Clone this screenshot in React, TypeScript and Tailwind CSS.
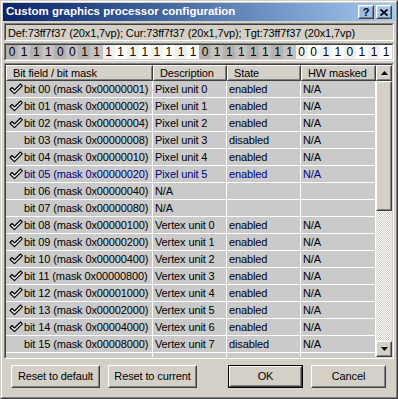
import React from "react";

const BITS = "01110011111111110111111100110111";

interface IRow {
  bit: string;
  mask: string;
  desc: string;
  state: string;
  hw: string;
  checked: boolean;
  blue?: boolean;
}

const rows: IRow[] = [
  { bit: "00", mask: "0x00000001", desc: "Pixel unit 0", state: "enabled", hw: "N/A", checked: true },
  { bit: "01", mask: "0x00000002", desc: "Pixel unit 1", state: "enabled", hw: "N/A", checked: true },
  { bit: "02", mask: "0x00000004", desc: "Pixel unit 2", state: "enabled", hw: "N/A", checked: true },
  { bit: "03", mask: "0x00000008", desc: "Pixel unit 3", state: "disabled", hw: "N/A", checked: false },
  { bit: "04", mask: "0x00000010", desc: "Pixel unit 4", state: "enabled", hw: "N/A", checked: true },
  { bit: "05", mask: "0x00000020", desc: "Pixel unit 5", state: "enabled", hw: "N/A", checked: true, blue: true },
  { bit: "06", mask: "0x00000040", desc: "N/A", state: "", hw: "", checked: false },
  { bit: "07", mask: "0x00000080", desc: "N/A", state: "", hw: "", checked: false },
  { bit: "08", mask: "0x00000100", desc: "Vertex unit 0", state: "enabled", hw: "N/A", checked: true },
  { bit: "09", mask: "0x00000200", desc: "Vertex unit 1", state: "enabled", hw: "N/A", checked: true },
  { bit: "10", mask: "0x00000400", desc: "Vertex unit 2", state: "enabled", hw: "N/A", checked: true },
  { bit: "11", mask: "0x00000800", desc: "Vertex unit 3", state: "enabled", hw: "N/A", checked: true },
  { bit: "12", mask: "0x00001000", desc: "Vertex unit 4", state: "enabled", hw: "N/A", checked: true },
  { bit: "13", mask: "0x00002000", desc: "Vertex unit 5", state: "enabled", hw: "N/A", checked: true },
  { bit: "14", mask: "0x00004000", desc: "Vertex unit 6", state: "enabled", hw: "N/A", checked: true },
  { bit: "15", mask: "0x00008000", desc: "Vertex unit 7", state: "disabled", hw: "N/A", checked: false },
];

// classic 3d edges
const Raised = ({ className, children }: { className?: string; children?: React.ReactNode }) => (
  <div className={"border border-t-white border-l-white border-r-[#404040] border-b-[#404040] " + (className || "")}>
    <div className="w-full h-full border border-t-[#D4D0C8] border-l-[#D4D0C8] border-r-[#808080] border-b-[#808080] flex items-center justify-center">
      {children}
    </div>
  </div>
);

const Sunken = ({ className, children }: { className?: string; children?: React.ReactNode }) => (
  <div className={"border border-t-[#808080] border-l-[#808080] border-r-white border-b-white " + (className || "")}>
    <div className="w-full h-full border border-t-[#404040] border-l-[#404040] border-r-[#D4D0C8] border-b-[#D4D0C8] flex overflow-hidden">
      {children}
    </div>
  </div>
);

const Check = () => (
  <svg width="14" height="12" viewBox="0 0 14 12" className="shrink-0">
    <path d="M1 6.5 L3 4.5 L5.5 7 L11.5 1 L13.3 2.8 L5.5 10.6 Z" fill="#ececec" stroke="#000" strokeWidth="1.1" strokeLinejoin="round" />
  </svg>
);

const Arrow = ({ up }: { up: boolean }) => (
  <svg width="7" height="4" viewBox="0 0 7 4">
    <path d={up ? "M0 4 L3.5 0 L7 4 Z" : "M0 0 L3.5 4 L7 0 Z"} fill="#000" />
  </svg>
);

const Header = ({ w, label }: { w: string; label: string }) => (
  <Raised className={w + " h-[16px] shrink-0"}>
    <span className="w-full pl-[5px] leading-[14px]">{label}</span>
  </Raised>
);

const App = () => {
  return (
    <div
      className="w-[398px] h-[399px] bg-[#D4D0C8] border border-t-[#D4D0C8] border-l-[#D4D0C8] border-r-[#404040] border-b-[#404040] text-[11px] text-black tracking-[-0.12px]"
      style={{ fontFamily: '"Liberation Sans", Arial, sans-serif' }}
    >
      <div className="w-full h-full border border-t-white border-l-white border-r-[#808080] border-b-[#808080] p-px flex flex-col">
        {/* title bar */}
        <div className="h-[18px] bg-linear-to-r from-[#0A246A] to-[#A6CAF0] flex items-center pl-[3px] pr-[3px]">
          <span className="text-white font-bold text-[11.5px] tracking-normal flex-1">Custom graphics processor configuration</span>
          <Raised className="w-[16px] h-[14px]">
            <span className="font-bold text-[11px] leading-none tracking-normal">?</span>
          </Raised>
          <Raised className="w-[16px] h-[14px] ml-[2px]">
            <svg width="8" height="7" viewBox="0 0 8 7">
              <path d="M0.5 0.5 L7.5 6.5 M7.5 0.5 L0.5 6.5" stroke="#000" strokeWidth="1.8" />
            </svg>
          </Raised>
        </div>

        <div className="px-px flex flex-col">
          {/* info line */}
          <Sunken className="mt-[2px] h-[18px]">
            <span className="pl-[2px] leading-[16px] whitespace-nowrap">
              Def:73ff7f37 (20x1,7vp); Cur:73ff7f37 (20x1,7vp); Tgt:73ff7f37 (20x1,7vp)
            </span>
          </Sunken>

          {/* bit bar */}
          <Sunken className="mt-[2px] h-[18px]">
            {BITS.split("").map((b, i) => {
              const gray = Math.floor(i / 8) % 2 === 0;
              const even = i % 2 === 0;
              const bg = gray
                ? even
                  ? "bg-[#B2B2B2]"
                  : "bg-[#C2C2C2]"
                : even
                ? "bg-[#F0F0F0]"
                : "bg-white";
              return (
                <div key={i} className={"flex-1 flex items-center justify-center text-[12px] " + bg}>
                  {b}
                </div>
              );
            })}
          </Sunken>

          {/* list */}
          <Sunken className="mt-[2px] h-[296px]">
            <div className="flex-1 flex flex-col overflow-hidden bg-[#CACACA]">
              <div className="flex bg-[#D4D0C8]">
                <Header w="w-[147px]" label="Bit field / bit mask" />
                <Header w="w-[74px]" label="Description" />
                <Header w="w-[74px]" label="State" />
                <Header w="w-[75px]" label="HW masked" />
              </div>
              {[...rows, null].map((r, i) => (
                <div key={i} className={"flex h-[17px] shrink-0 border-b border-white " + (r && r.blue ? "text-[#000080]" : "")}>
                  <div className="w-[147px] border-r border-white flex items-center pl-[3px]">
                    <div className="w-[15px]">{r && r.checked && <Check />}</div>
                    <span className="whitespace-nowrap">{r && `bit ${r.bit} (mask ${r.mask})`}</span>
                  </div>
                  <div className="w-[74px] border-r border-white pl-[2px] leading-[16px] whitespace-nowrap overflow-hidden">{r && r.desc}</div>
                  <div className="w-[74px] border-r border-white pl-[2px] leading-[16px]">{r && r.state}</div>
                  <div className="w-[75px] border-r border-white pl-[2px] leading-[16px]">{r && r.hw}</div>
                </div>
              ))}
            </div>
            {/* scrollbar */}
            <div className="w-[16px] flex flex-col">
              <Raised className="h-[16px]">
                <Arrow up />
              </Raised>
              <Raised className="h-[130px]" />
              <div className="flex-1 bg-[repeating-conic-gradient(#ffffff_0_25%,#D4D0C8_0_50%)] bg-[length:2px_2px]" />
              <Raised className="h-[16px]">
                <Arrow up={false} />
              </Raised>
            </div>
          </Sunken>

          {/* buttons */}
          <div className="mt-[6px] h-[23px] flex">
            <Raised className="w-[89px] h-full ml-[7px]">Reset to default</Raised>
            <Raised className="w-[89px] h-full ml-[8px]">Reset to current</Raised>
            <div className="w-[75px] h-full ml-[31px] border border-black">
              <Raised className="w-full h-full">OK</Raised>
            </div>
            <Raised className="w-[75px] h-full ml-[8px]">Cancel</Raised>
          </div>
        </div>
      </div>
    </div>
  );
};

export default App;
